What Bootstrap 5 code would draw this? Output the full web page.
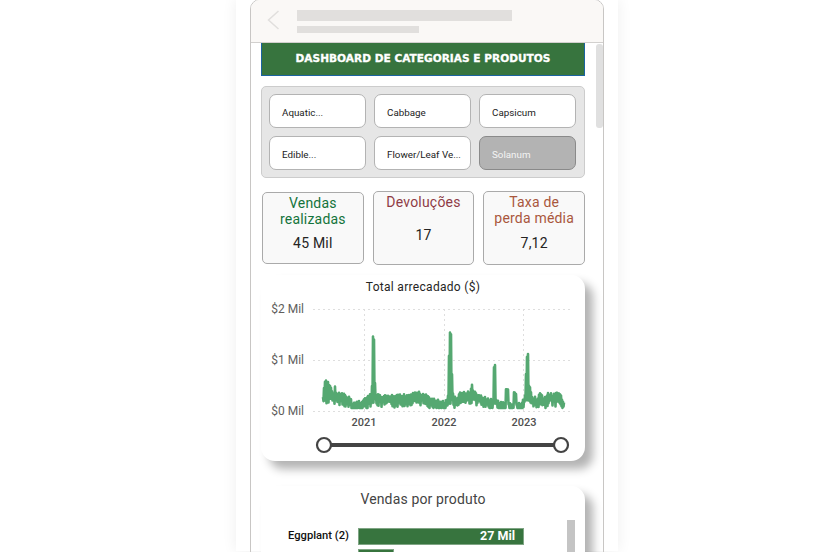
<!DOCTYPE html>
<html lang="pt-BR">
<head>
    <meta charset="UTF-8">
    <title>Dashboard de categorias e produtos</title>
    <link href="https://cdn.jsdelivr.net/npm/bootstrap@5.3.0/dist/css/bootstrap.min.css" rel="stylesheet">
    <style>
        html, body { height: 552px; overflow: hidden; background: #fff; }
        body { font-family: Roboto, "Liberation Sans", sans-serif; color: #252423; }

        .stage { height: 552px; padding-left: 236px; }
        .band { width: 382px; height: 552px; padding: 0 14px; background: #fff; box-shadow: 0 0 14px rgba(0, 0, 0, .07); }
        .phone { width: 354px; height: 600px; margin-top: -1px; border: 1px solid #c8c6c4; border-radius: 10px 10px 0 0; overflow: hidden; position: relative; }

        .phone-head { height: 43px; padding: 10px 0 0 16px; background: #faf8f6; border-bottom: 1px solid #d2d0ce; gap: 17px; }
        .ph-bar1 { width: 215px; height: 11px; background: #e1dfdd; }
        .ph-bar2 { width: 122px; height: 7px; margin-top: 5px; background: #e1dfdd; }

        .report { padding: 0 18px 0 10px; }
        .banner { height: 33px; background: #37743e; border: 1px solid #1a63a0; border-top: 0; color: #fff; font-family: "DejaVu Sans", sans-serif; font-weight: 700; font-size: 10.6px; -webkit-text-stroke: .3px #fff; }

        .slicer { height: 92px; margin-top: 10px; padding: 7px; background: #e6e6e6; border: 1px solid #ccc; border-radius: 5px; display: grid; grid-template-columns: repeat(3, 97px); grid-auto-rows: 34px; column-gap: 8px; row-gap: 8px; }
        .chip { padding: 5px 0 0 12px; background: #fff; border: 1px solid #b3b3b3; border-radius: 7px; font-size: 9.8px; color: #222; }
        .chip-on { background: #b3b3b3; border-color: #8a8a8a; color: #f4f4f4; }

        .kpis { margin-top: 13px; padding-left: 1px; gap: 9px; }
        .kpi { width: 102px; height: 74px; padding-top: 2px; background: #f9f9f9; border: 1px solid #aaa; border-radius: 5px; text-align: center; font-size: 14px; line-height: 16px; letter-spacing: .2px; }
        .kpi:first-child { height: 72px; margin-top: 1px; }
        .kpi-v { font-size: 14px; color: #252423; }
        .tx-green { color: #14743c; }
        .tx-red { color: #8f3c46; }
        .tx-orange { color: #a9573d; }

        .panel { background: #fff; border-radius: 14px; box-shadow: 8px 8px 10px rgba(0, 0, 0, .3); }
        .chart-panel { height: 186px; margin-top: 10px; }
        .chart-title { font-size: 12px; line-height: 14px; padding-top: 5px; letter-spacing: .3px; }
        .chart-svg { display: block; margin-top: -19px; }
        .ax { font-family: Roboto, sans-serif; font-size: 12px; fill: #605e5c; }
        .ax-x { font-size: 11px; font-weight: 500; fill: #505050; }

        .bars-panel { height: 90px; margin-top: 25px; position: relative; }
        .bars-title { font-size: 14px; line-height: 16px; padding-top: 5px; color: #444; letter-spacing: .15px; }
        .bar-row { height: 17px; margin-top: 21px; }
        .bar-row + .bar-row { margin-top: 4px; }
        .bar-lbl { width: 88px; text-align: right; font-size: 11.2px; font-weight: 500; color: #111; }
        .bar-fill { height: 17px; margin-left: 9px; padding-right: 8px; background: #37743e; border: 1px solid #7fa584; color: #fff; font-size: 12.5px; font-weight: 700; }
        .bars-scroll { position: absolute; left: 306px; top: 34px; width: 8px; height: 60px; background: #c4c4c4; }
        .page-scroll { position: absolute; left: 345px; top: 44px; width: 7px; height: 84px; background: #e0e0e0; border-radius: 3px; }
    </style>
</head>
<body>
<div class="stage">
    <div class="band">
        <div class="phone">
            <div class="phone-head d-flex">
                <svg width="13" height="20" viewBox="0 0 13 20"><path d="M11.5 1 L1.5 10 L11.5 19" fill="none" stroke="#e1dfdd" stroke-width="1.5"/></svg>
                <div>
                    <div class="ph-bar1"></div>
                    <div class="ph-bar2"></div>
                </div>
            </div>

            <div class="report">
                <div class="banner d-flex align-items-center justify-content-center">DASHBOARD DE CATEGORIAS E PRODUTOS</div>

                <div class="slicer">
                    <div class="chip d-flex align-items-center">Aquatic...</div>
                    <div class="chip d-flex align-items-center">Cabbage</div>
                    <div class="chip d-flex align-items-center">Capsicum</div>
                    <div class="chip d-flex align-items-center">Edible...</div>
                    <div class="chip d-flex align-items-center">Flower/Leaf Ve...</div>
                    <div class="chip chip-on d-flex align-items-center">Solanum</div>
                </div>

                <div class="kpis d-flex">
                    <div class="kpi">
                        <div class="tx-green">Vendas<br>realizadas</div>
                        <div class="kpi-v mt-2">45 Mil</div>
                    </div>
                    <div class="kpi">
                        <div class="tx-red">Devoluções</div>
                        <div class="kpi-v" style="margin-top:17px">17</div>
                    </div>
                    <div class="kpi">
                        <div class="tx-orange">Taxa de<br>perda média</div>
                        <div class="kpi-v" style="margin-top:9px">7,12</div>
                    </div>
                </div>

                <div class="panel chart-panel">
                    <div class="chart-title text-center">Total arrecadado ($)</div>
                    <svg class="chart-svg" width="324" height="186" viewBox="261 275 324 186">
                        <g stroke="#dedede" stroke-width="1" stroke-dasharray="2 3">
                            <path d="M313 309.5H571M313 360.5H571M313 411.5H571"/>
                            <path d="M364.5 309V411M444.5 309V411M523.5 309V411"/>
                        </g>
                        <text class="ax" x="304" y="313" text-anchor="end">$2 Mil</text>
                        <text class="ax" x="304" y="364" text-anchor="end">$1 Mil</text>
                        <text class="ax" x="304" y="415" text-anchor="end">$0 Mil</text>
                        <text class="ax ax-x" x="364" y="426" text-anchor="middle">2021</text>
                        <text class="ax ax-x" x="444" y="426" text-anchor="middle">2022</text>
                        <text class="ax ax-x" x="524" y="426" text-anchor="middle">2023</text>
                        <path id="serie" fill="none" stroke="#55a871" stroke-width="2.6" stroke-linejoin="round"/>
                        <path d="M324 445H561" stroke="#444" stroke-width="4"/>
                        <circle cx="324" cy="445" r="7" fill="#fff" stroke="#444" stroke-width="2.2"/>
                        <circle cx="561" cy="445" r="7" fill="#fff" stroke="#444" stroke-width="2.2"/>
                    </svg>
                </div>

                <div class="panel bars-panel">
                    <div class="bars-title text-center">Vendas por produto</div>
                    <div class="bar-row d-flex align-items-center">
                        <div class="bar-lbl">Eggplant (2)</div>
                        <div class="bar-fill d-flex align-items-center justify-content-end" style="width:166px">27 Mil</div>
                    </div>
                    <div class="bar-row d-flex align-items-center">
                        <div class="bar-lbl"></div>
                        <div class="bar-fill" style="width:36px"></div>
                    </div>
                    <div class="bars-scroll"></div>
                </div>
            </div>

            <div class="page-scroll"></div>
        </div>
    </div>
</div>

<script src="https://cdn.jsdelivr.net/npm/bootstrap@5.3.0/dist/js/bootstrap.bundle.min.js"></script>
<script>
    // topo da serie por x, o resto e ruido
    const topo = [[323,396],[325,381],[328,382],[331,386],[333,394],[335,387],[337,393],[340,393],[345,395],[350,398],
        [352,402],[356,402],[362,400],[368,397],[371,394],[372.5,380],[373,337],[374,337],[375,384],[376,393],[380,396],
        [395,396],[410,394],[415,391],[425,395],[435,400],[445,402],[448,396],[449.5,332],[451,332],[452,375],[453,394],
        [456,398],[460,393],[470,392],[472,384],[474,392],[480,395],[485,398],[490,400],[493,398],[494,366],[495,366],
        [496,398],[500,403],[505,403],[506,390],[508,390],[509,404],[513,404],[514,392],[516,392],[517,404],[522,403],
        [525,395],[527,355],[528,355],[529,385],[532,395],[538,398],[540,392],[543,398],[546,398],[548,393],[555,395],
        [558,392],[562,398],[564,400]];

    function topoEm(x) {
        for (let i = 1; i < topo.length; i++) {
            if (x <= topo[i][0]) {
                const [x0, y0] = topo[i - 1], [x1, y1] = topo[i];
                return y0 + (y1 - y0) * (x - x0) / (x1 - x0);
            }
        }
        return 400;
    }

    let semente = 7;
    function ruido() {
        semente = (semente * 9301 + 49297) % 233280;
        return semente / 233280;
    }

    let d = "";
    for (let x = 323; x <= 564; x += 0.5) {
        const t = topoEm(x);
        const y = x * 2 % 2 === 0 ? t - 1 + ruido() * 4 : Math.min(Math.max(t, 392) + 5 + ruido() * 7, 408);
        d += (d ? "L" : "M") + x + " " + y.toFixed(1);
    }
    document.getElementById("serie").setAttribute("d", d);
</script>
</body>
</html>
